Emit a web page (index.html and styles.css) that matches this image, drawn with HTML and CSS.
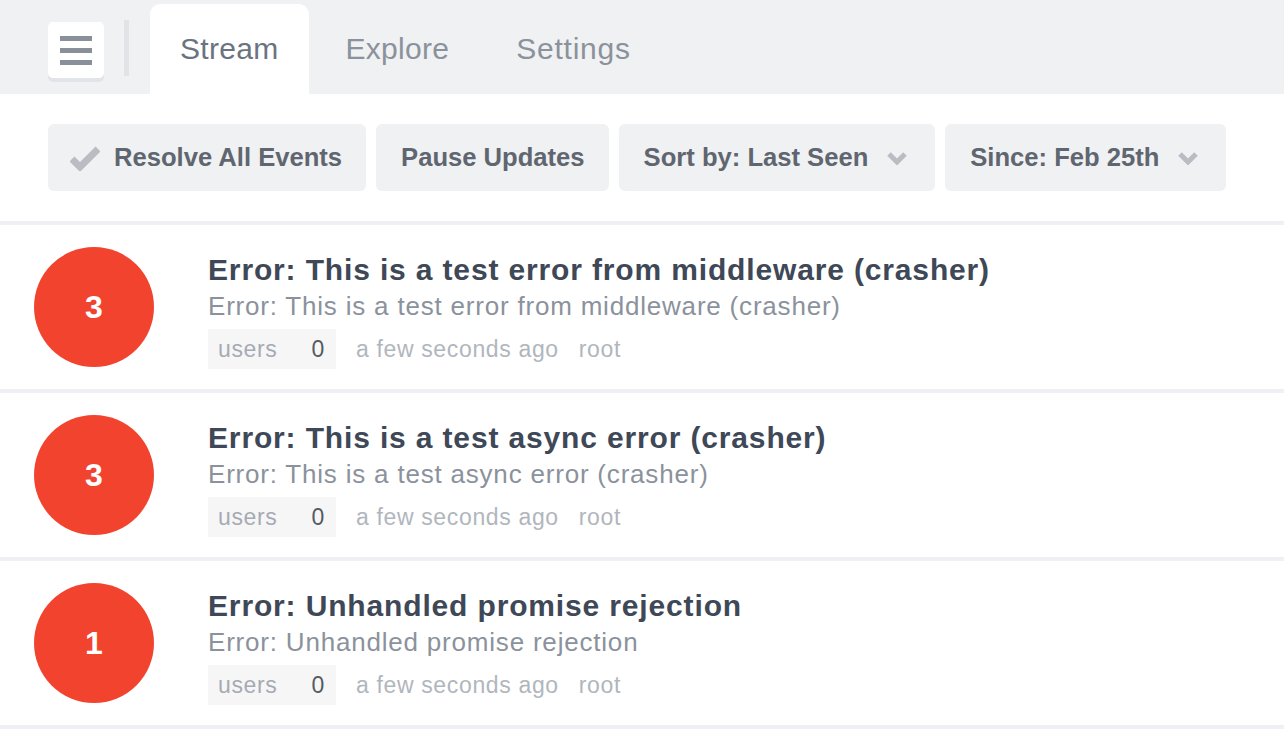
FILE: index.html
```html
<!DOCTYPE html>
<html>
<head>
<meta charset="utf-8">
<link rel="stylesheet" href="styles.css">
</head>
<body>
<header class="topbar">
  <button class="menu-btn" aria-label="Menu">
    <span></span><span></span><span></span>
  </button>
  <div class="divider"></div>
  <nav class="tabs">
    <a class="tab active">Stream</a>
    <a class="tab">Explore</a>
    <a class="tab tab-wide">Settings</a>
  </nav>
</header>

<section class="toolbar">
  <button class="tool">
    <svg class="check" width="30" height="26" viewBox="0 0 30 26"><path d="M2 14 L10 22 L28 4" fill="none" stroke="#b9bdc3" stroke-width="7"/></svg>
    Resolve All Events
  </button>
  <button class="tool">Pause Updates</button>
  <button class="tool">Sort by: Last Seen
    <svg class="chev" width="20" height="14" viewBox="0 0 20 14"><path d="M2 3 L10 11 L18 3" fill="none" stroke="#b9bdc3" stroke-width="5"/></svg>
  </button>
  <button class="tool">Since: Feb 25th
    <svg class="chev" width="20" height="14" viewBox="0 0 20 14"><path d="M2 3 L10 11 L18 3" fill="none" stroke="#b9bdc3" stroke-width="5"/></svg>
  </button>
</section>

<main class="stream">
  <article class="event">
    <div class="count">3</div>
    <div class="info">
      <h2 class="title">Error: This is a test error from middleware (crasher)</h2>
      <p class="desc">Error: This is a test error from middleware (crasher)</p>
      <div class="meta"><span class="tag"><span class="tag-k">users</span><span class="tag-v">0</span></span><span class="time">a few seconds ago</span><span class="env">root</span></div>
    </div>
  </article>
  <article class="event">
    <div class="count">3</div>
    <div class="info">
      <h2 class="title">Error: This is a test async error (crasher)</h2>
      <p class="desc">Error: This is a test async error (crasher)</p>
      <div class="meta"><span class="tag"><span class="tag-k">users</span><span class="tag-v">0</span></span><span class="time">a few seconds ago</span><span class="env">root</span></div>
    </div>
  </article>
  <article class="event">
    <div class="count">1</div>
    <div class="info">
      <h2 class="title">Error: Unhandled promise rejection</h2>
      <p class="desc">Error: Unhandled promise rejection</p>
      <div class="meta"><span class="tag"><span class="tag-k">users</span><span class="tag-v">0</span></span><span class="time">a few seconds ago</span><span class="env">root</span></div>
    </div>
  </article>
</main>
</body>
</html>
```

FILE: styles.css
```css
* { box-sizing: border-box; }
html, body { margin: 0; padding: 0; background: #fff; }
body { font-family: "Liberation Sans", Arial, sans-serif; }

.topbar {
  height: 94px;
  background: #f0f1f3;
  display: flex;
  align-items: flex-end;
  padding-left: 48px;
}
.menu-btn {
  width: 56px;
  height: 56px;
  margin-bottom: 16px;
  background: #fff;
  border: 0;
  border-radius: 5px;
  box-shadow: 0 4px 0 #e3e4e8;
  display: flex;
  flex-direction: column;
  justify-content: center;
  align-items: center;
  gap: 7px;
  padding: 0;
}
.menu-btn span {
  display: block;
  width: 32px;
  height: 5px;
  background: #8a9099;
}
.divider {
  width: 5px;
  height: 56px;
  margin: 0 21px 18px 20px;
  background: #e1e3e7;
}
.tabs { display: flex; align-items: flex-end; }
.tab {
  height: 90px;
  padding: 0 30px;
  display: flex;
  align-items: center;
  font-size: 30px;
  letter-spacing: 0.3px;
  color: #8b929b;
  border-radius: 10px 10px 0 0;
  margin-right: 7px;
  white-space: nowrap;
}
.tab.active { background: #fff; color: #6a7481; }
.tab.tab-wide { letter-spacing: 0.75px; }

.toolbar {
  display: flex;
  gap: 10px;
  padding: 30px 48px;
  border-bottom: 4px solid #eff0f3;
}
.tool {
  flex: none;
  white-space: nowrap;
  height: 67px;
  background: #f0f1f3;
  border: 0;
  border-radius: 6px;
  font-family: "Liberation Sans", Arial, sans-serif;
  font-weight: bold;
  font-size: 25.6px;
  color: #5f6670;
  padding: 0 24px 0 25px;
  display: flex;
  align-items: center;
  gap: 14px;
}
.tool .check { margin-left: -3px; margin-right: 0; }
.tool .chev { margin-left: 5px; margin-right: 4px; }

.event {
  height: 168px;
  display: flex;
  align-items: center;
  padding-left: 34px;
  border-bottom: 4px solid #eff0f3;
}
.count {
  width: 120px;
  height: 120px;
  border-radius: 50%;
  background: #f2432f;
  color: #fff;
  font-weight: bold;
  font-size: 32px;
  display: flex;
  align-items: center;
  justify-content: center;
  flex: none;
}
.info { margin-left: 54px; padding-top: 8px; }
.title {
  margin: 0;
  font-size: 30px;
  letter-spacing: 0.85px;
  font-weight: bold;
  color: #3e4857;
  line-height: 34px;
  white-space: nowrap;
}
.desc {
  margin: 4px 0 0;
  font-size: 26px;
  letter-spacing: 0.8px;
  color: #8b929c;
  line-height: 30px;
  white-space: nowrap;
}
.meta {
  margin-top: 8px;
  display: flex;
  align-items: center;
  font-size: 23px;
  letter-spacing: 0.65px;
  color: #b1b6bd;
  white-space: nowrap;
}
.tag {
  height: 40px;
  background: #f6f6f7;
  display: flex;
  align-items: center;
  padding: 0 11px 0 10px;
  margin-right: 20px;
}
.tag-k { color: #a6abb3; }
.tag-v { color: #555b63; margin-left: 34px; }
.env { margin-left: 20px; }
```
